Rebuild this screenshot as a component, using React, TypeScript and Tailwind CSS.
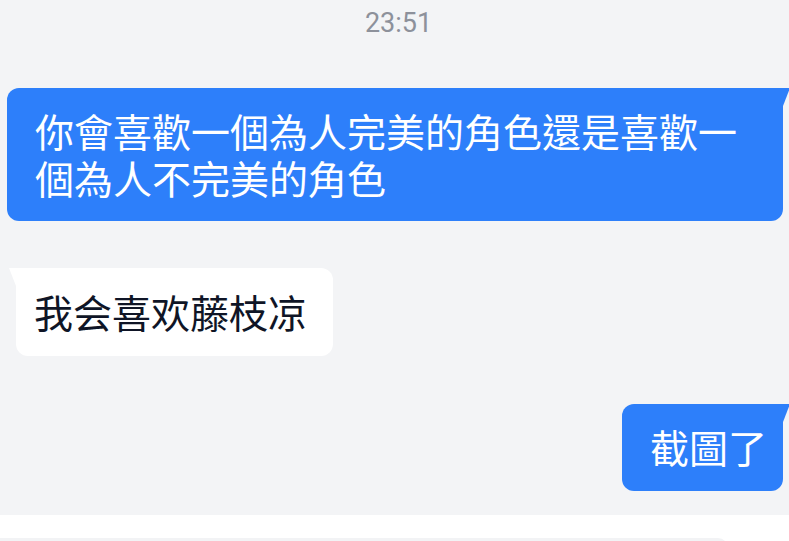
const cjk = '"Noto Sans CJK TC", "Noto Sans CJK SC", "Noto Sans", sans-serif';

function SentBubble({ text, className = "" }: { text: string; className?: string }) {
  return (
    <div className="flex justify-end pr-[6px]">
      <div
        className={`relative max-w-[776px] rounded-[12px] rounded-tr-none bg-[#2d7ffa] pl-[28px] pr-[16px] text-[39px] leading-[47px] text-white ${className}`}
      >
        {text}
        <div className="absolute right-[-7px] top-0 h-[18px] w-[7px] bg-[#2d7ffa] [clip-path:polygon(0_0,100%_0,0_100%)]" />
      </div>
    </div>
  );
}

function ReceivedBubble({ text }: { text: string }) {
  return (
    <div className="flex justify-start pl-[16px]">
      <div className="relative rounded-[12px] rounded-tl-none bg-white pl-[18px] pr-[26px] pt-[20px] pb-[21px] text-[39px] leading-[47px] text-[#0f1526]">
        {text}
        <div className="absolute left-[-7px] top-0 h-[18px] w-[7px] bg-white [clip-path:polygon(0_0,100%_0,100%_100%)]" />
      </div>
    </div>
  );
}

export default function App() {
  return (
    <div className="flex h-[541px] w-full flex-col overflow-hidden bg-white" style={{ fontFamily: cjk }}>
      <div className="flex h-[515px] flex-col bg-[#f3f4f6]">
        <div
          className="h-[47px] pl-[8px] pt-[10px] text-center text-[27px] leading-[27px] text-[#8d919b]"
          style={{ fontFamily: 'Roboto, "Liberation Sans", sans-serif' }}
        >
          23:51
        </div>

        <div className="mt-[41px]">
          <SentBubble text="你會喜歡一個為人完美的角色還是喜歡一個為人不完美的角色" className="pt-[19px] pb-[20px]" />
        </div>

        <div className="mt-[47px]">
          <ReceivedBubble text="我会喜欢藤枝凉" />
        </div>

        <div className="mt-[48px]">
          <SentBubble text="截圖了" className="pt-[19px] pb-[21px]" />
        </div>
      </div>

      <div className="h-[26px] bg-white pt-[23px]">
        <div className="h-[20px] w-[728px] rounded-tr-[10px] bg-[#f2f3f5]" />
      </div>
    </div>
  );
}
